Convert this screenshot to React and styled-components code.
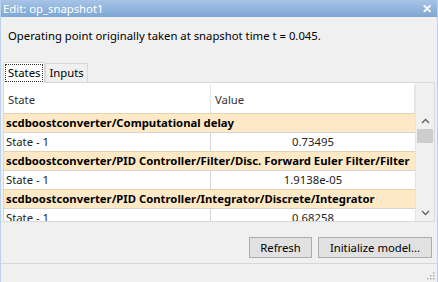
import React from "react";
import styled, { createGlobalStyle } from "styled-components";

const Global = createGlobalStyle`
  html, body { margin: 0; padding: 0; background: #f0f0f0; }
  body { font-family: "Noto Sans", "Open Sans", sans-serif; }
`;

const Window = styled.div`
  width: 438px;
  height: 282px;
  box-sizing: border-box;
  display: flex;
  flex-direction: column;
  background: #f0f0f0;
  border-left: 1px solid #b9d1ea;
  border-right: 1px solid #b9d1ea;
  overflow: hidden;
`;

const TitleBar = styled.div`
  height: 17px;
  flex: none;
  display: flex;
  align-items: center;
  justify-content: space-between;
  padding: 0 5px 0 2px;
  background: linear-gradient(#a6c4e6, #7fa6d4);
  color: #fff;
  font-size: 11.3px;
  line-height: 17px;
`;

const Close = styled.span`
  font-size: 12px;
  font-weight: bold;
`;

const Message = styled.div`
  padding: 11px 0 0 7px;
  height: 38px;
  box-sizing: border-box;
  font-size: 11.3px;
  color: #000;
  line-height: 16px;
`;

const Content = styled.div`
  padding: 7px 2px 0 2px;
  display: flex;
  flex-direction: column;
`;

const TabStrip = styled.div`
  display: flex;
  align-items: flex-end;
  height: 21px;
`;

const Tab = styled.div`
  box-sizing: border-box;
  height: ${(p) => (p.$active ? 21 : 19)}px;
  padding: ${(p) => (p.$active ? "1px 1px" : "0 3px")};
  font-size: 11.3px;
  line-height: 17px;
  color: #000;
  background: ${(p) => (p.$active ? "#fff" : "#f0f0f0")};
  border: 1px solid #d9d9d9;
  border-bottom: none;
  margin-bottom: ${(p) => (p.$active ? "-1px" : "0")};
  position: relative;
  z-index: ${(p) => (p.$active ? 1 : 0)};
`;

const Focus = styled.span`
  display: block;
  border: 1px dotted #333;
  padding: 0 2px;
  line-height: 16px;
`;

const Panel = styled.div`
  height: 140px;
  box-sizing: border-box;
  border: 1px solid #d9d9d9;
  background: #fff;
  padding-top: 2px;
  display: flex;
  overflow: hidden;
`;

const Rows = styled.div`
  flex: 1;
  overflow: hidden;
`;

const Header = styled.div`
  display: grid;
  grid-template-columns: 207px 1fr;
  height: 28px;
  font-size: 11.3px;
  color: #333;
  & > div {
    display: flex;
    align-items: center;
    padding-left: 4px;
    border-right: 1px solid #e5e5e5;
  }
`;

const GroupRow = styled.div`
  height: 19px;
  box-sizing: border-box;
  background: #fde9c6;
  border-top: 1px solid #e3d3b5;
  font-size: 11.3px;
  font-weight: bold;
  line-height: 18px;
  padding-left: 2px;
  white-space: nowrap;
  color: #000;
`;

const DataRow = styled.div`
  display: grid;
  grid-template-columns: 207px 1fr;
  height: 19px;
  box-sizing: border-box;
  border-top: 1px solid #d5d5d5;
  font-size: 11.3px;
  line-height: 18px;
  color: #222;
  & > div:first-child {
    padding-left: 2px;
    border-right: 1px solid #d5d5d5;
  }
  & > div:last-child {
    text-align: center;
  }
`;

const ScrollBar = styled.div`
  width: 18px;
  flex: none;
  display: flex;
  flex-direction: column;
  background: #f0f0f0;
  border-left: 1px solid #e5e5e5;
  margin-top: -2px;
`;

const Corner = styled.div`
  height: 29px;
`;

const Arrow = styled.div`
  height: 17px;
  display: flex;
  align-items: center;
  justify-content: center;
`;

const Thumb = styled.div`
  height: 14px;
  margin: 0 1px;
  background: #cdcdcd;
`;

const Track = styled.div`
  flex: 1;
`;

const ButtonRow = styled.div`
  display: flex;
  justify-content: flex-end;
  gap: 6px;
  padding: 15px 3px 0 0;
  height: 41px;
  box-sizing: border-box;
`;

const Button = styled.button`
  height: 21px;
  box-sizing: border-box;
  width: ${(p) => p.$w}px;
  background: #e1e1e1;
  border: 1px solid #adadad;
  font-family: inherit;
  font-size: 11.3px;
  color: #000;
  padding: 0;
`;

const StatusBar = styled.div`
  margin-top: auto;
  height: 18px;
  border-top: 1px solid #d7d7d7;
  position: relative;
`;

const Grip = styled.svg`
  position: absolute;
  right: 2px;
  bottom: 2px;
`;

const Chevron = ({ up }) => (
  <svg width="9" height="6" viewBox="0 0 9 6">
    <path
      d={up ? "M1 5 L4.5 1.5 L8 5" : "M1 1 L4.5 4.5 L8 1"}
      fill="none"
      stroke="#606060"
      strokeWidth="1.3"
    />
  </svg>
);

const data = [
  { group: "scdboostconverter/Computational delay", value: "0.73495" },
  {
    group:
      "scdboostconverter/PID Controller/Filter/Disc. Forward Euler Filter/Filter",
    value: "1.9138e-05",
  },
  {
    group: "scdboostconverter/PID Controller/Integrator/Discrete/Integrator",
    value: "0.68258",
  },
];

export default function App() {
  return (
    <>
      <Global />
      <Window>
        <TitleBar>
          <span>Edit: op_snapshot1</span>
          <Close>✕</Close>
        </TitleBar>
        <Message>
          Operating point originally taken at snapshot time t = 0.045.
        </Message>
        <Content>
          <TabStrip>
            <Tab $active>
              <Focus>States</Focus>
            </Tab>
            <Tab>Inputs</Tab>
          </TabStrip>
          <Panel>
            <Rows>
              <Header>
                <div>State</div>
                <div>Value</div>
              </Header>
              {data.map((d) => (
                <React.Fragment key={d.group}>
                  <GroupRow>{d.group}</GroupRow>
                  <DataRow>
                    <div>State - 1</div>
                    <div>{d.value}</div>
                  </DataRow>
                </React.Fragment>
              ))}
            </Rows>
            <ScrollBar>
              <Corner />
              <Arrow>
                <Chevron up />
              </Arrow>
              <Thumb />
              <Track />
              <Arrow>
                <Chevron />
              </Arrow>
            </ScrollBar>
          </Panel>
          <ButtonRow>
            <Button $w={63}>Refresh</Button>
            <Button $w={114}>Initialize model...</Button>
          </ButtonRow>
        </Content>
        <StatusBar>
          <Grip width="10" height="10" viewBox="0 0 10 10">
            {[
              [8, 2],
              [5, 5],
              [8, 5],
              [2, 8],
              [5, 8],
              [8, 8],
            ].map(([x, y]) => (
              <rect key={`${x}-${y}`} x={x} y={y} width="1.5" height="1.5" fill="#b0b0b0" />
            ))}
          </Grip>
        </StatusBar>
      </Window>
    </>
  );
}
